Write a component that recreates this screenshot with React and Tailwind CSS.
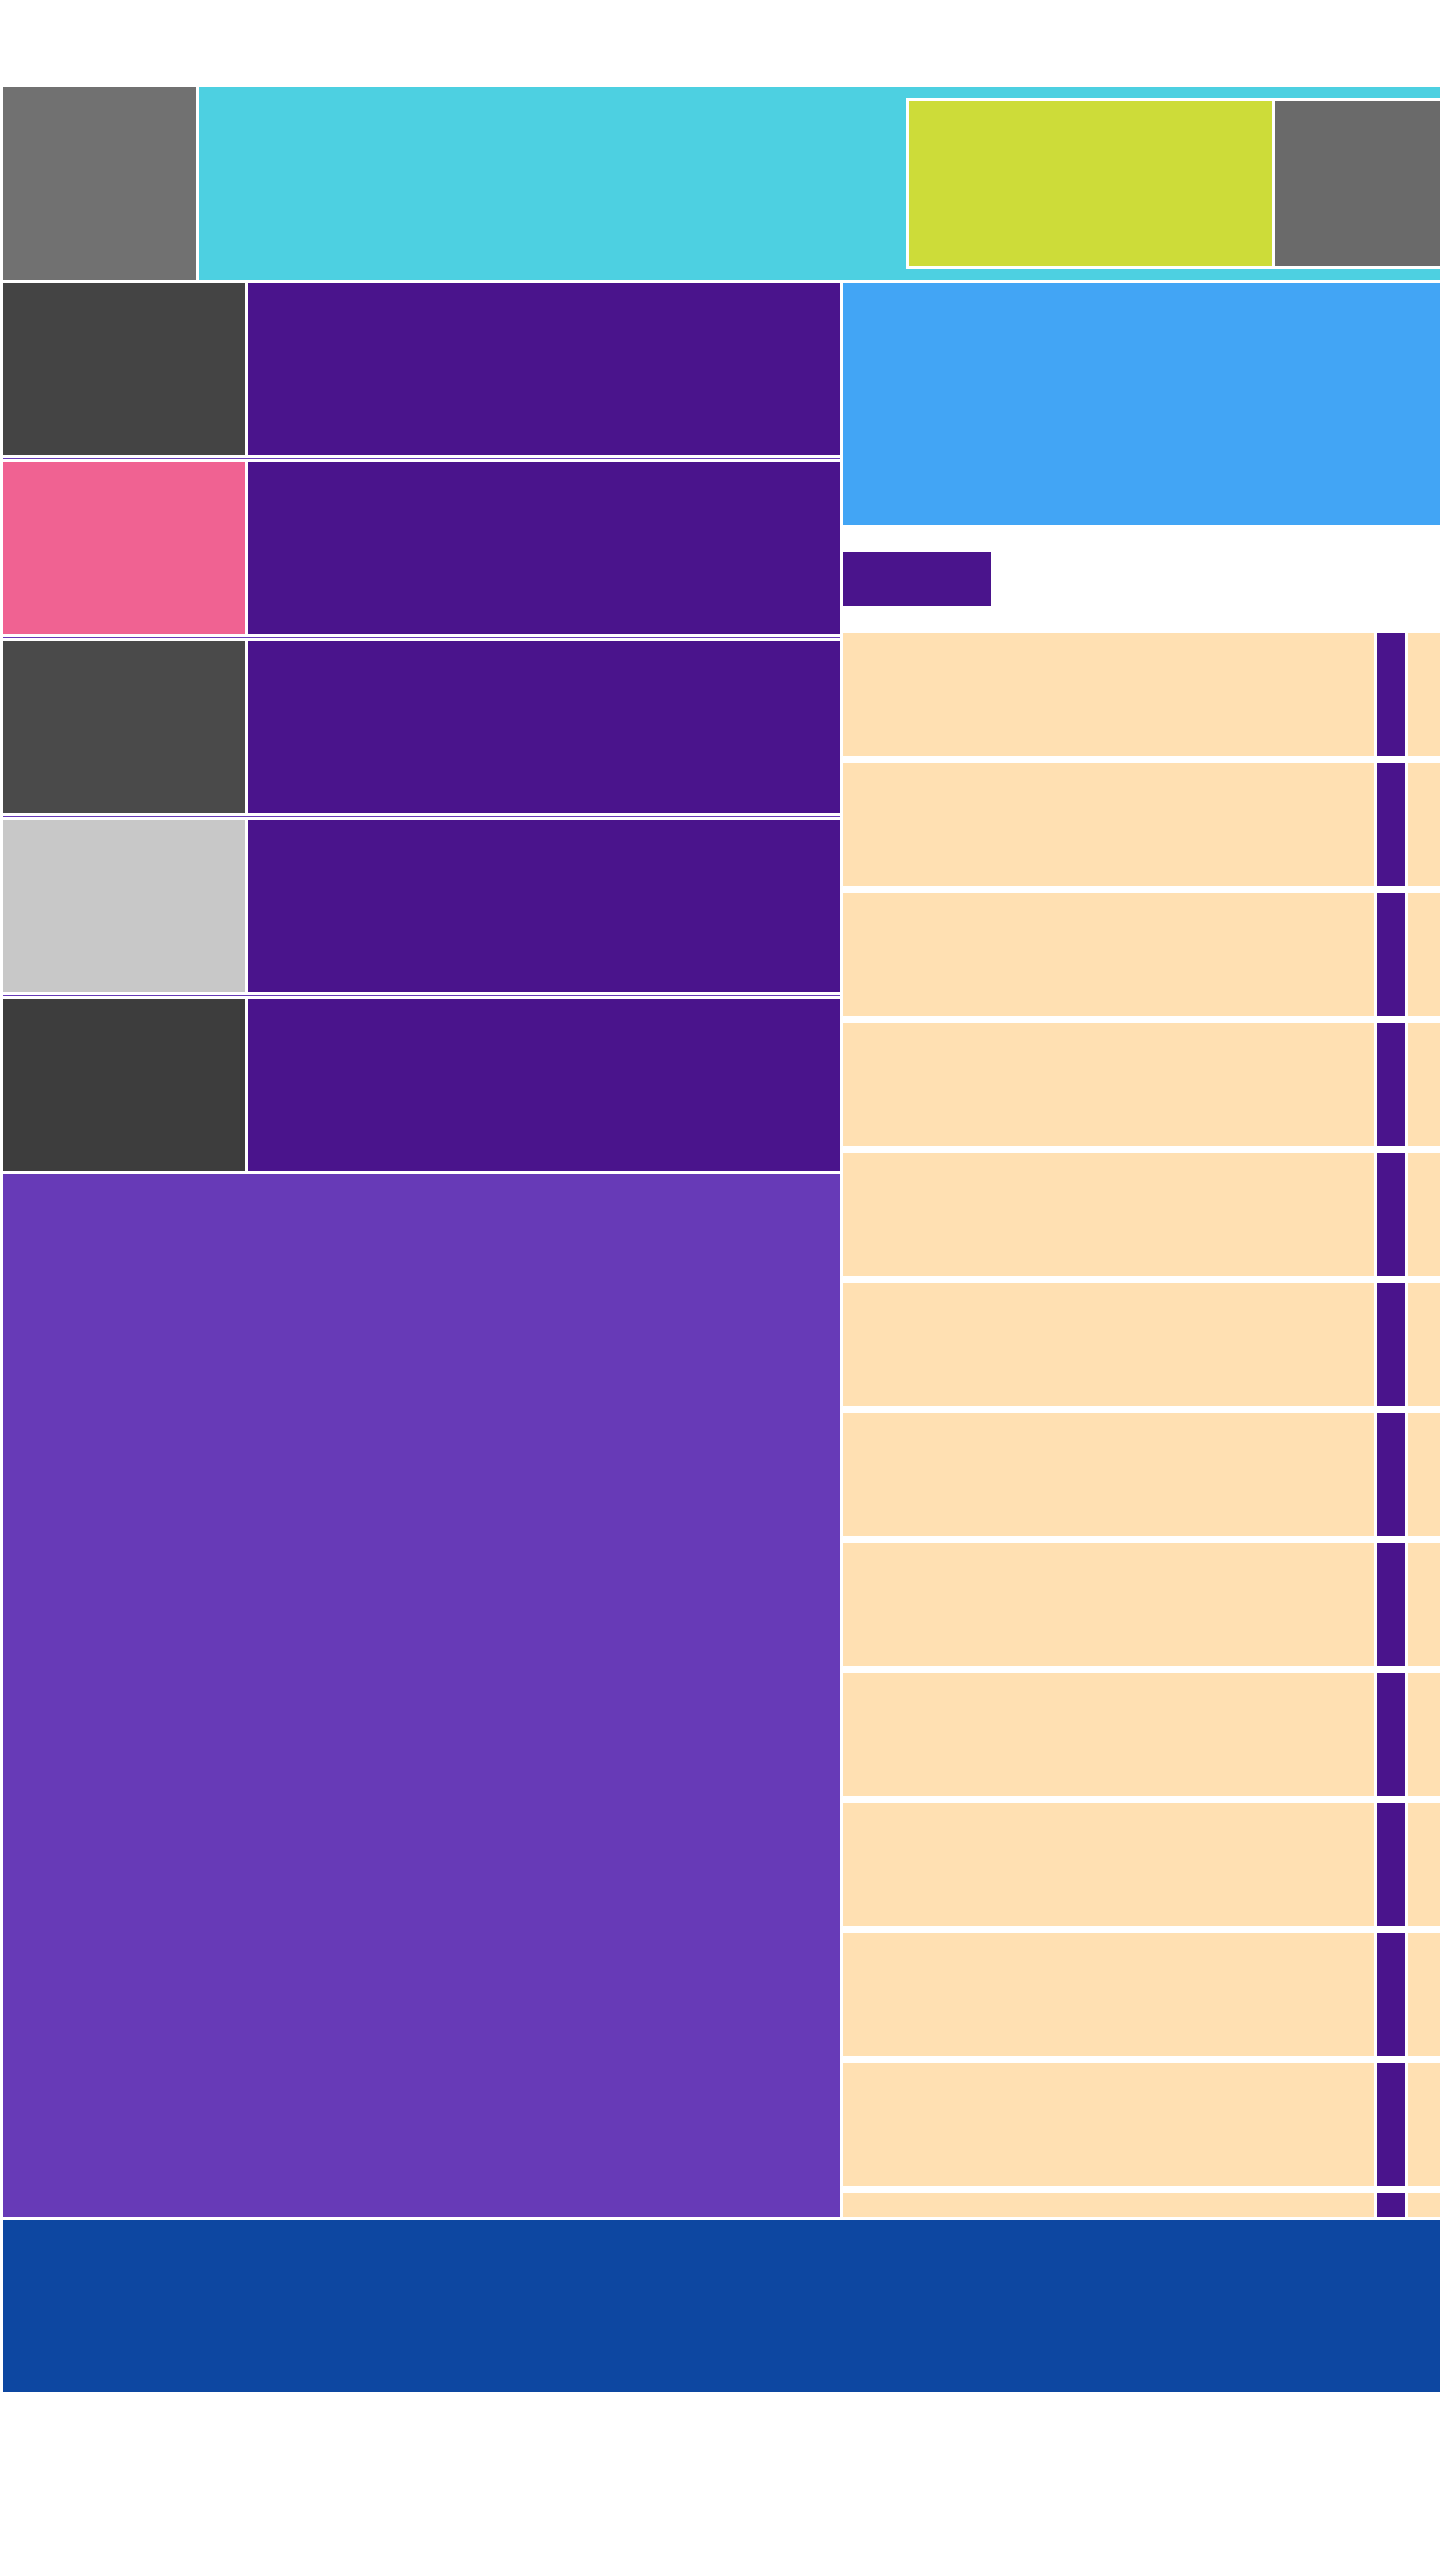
const leftRows = ["bg-[#444444]", "bg-[#f06292]", "bg-[#4a4a4a]", "bg-[#c8c8c8]", "bg-[#3d3d3d]"];

const LeftRow = ({ color }) => (
    <div className="flex gap-[3px] h-[172px]">
        <div className={`w-[242px] shrink-0 ${color}`}></div>
        <div className="flex-1 bg-[#4a148c]"></div>
    </div>
);

const Separator = () => (
    <div className="py-[3px]">
        <div className="h-px bg-[#673ab7]"></div>
    </div>
);

const PeachRow = () => (
    <div className="flex gap-[3px] h-[123px] shrink-0">
        <div className="w-[531px] shrink-0 bg-[#ffe0b2]"></div>
        <div className="w-[28px] shrink-0 bg-[#4a148c]"></div>
        <div className="flex-1 bg-[#ffe0b2]"></div>
    </div>
);

export default function App() {
    return (
        <div className="w-[1440px] h-[2560px] overflow-hidden bg-white pt-[87px]">
            <div className="w-[1600px] ml-[3px] flex flex-col gap-[3px]">

                {/* header */}
                <div className="flex gap-[3px] h-[193px]">
                    <div className="w-[193px] shrink-0 bg-[#717171]"></div>
                    <div className="flex-1 bg-[#4dd0e1] pt-[11px] pl-[707px]">
                        <div className="flex gap-[3px] h-[171px] bg-white p-[3px] w-[600px]">
                            <div className="w-[363px] shrink-0 bg-[#cddc39]"></div>
                            <div className="flex-1 bg-[#6a6a6a]"></div>
                        </div>
                    </div>
                </div>

                {/* main */}
                <div className="flex gap-[3px] h-[1934px]">
                    <div className="w-[837px] shrink-0 flex flex-col">
                        {leftRows.map((c, i) => (
                            <div key={i}>
                                {i > 0 && <Separator />}
                                <LeftRow color={c} />
                            </div>
                        ))}
                        <div className="flex-1 mt-[3px] bg-[#673ab7]"></div>
                    </div>

                    <div className="flex-1 flex flex-col overflow-hidden">
                        <div className="h-[242px] shrink-0 bg-[#42a5f5]"></div>
                        <div className="py-[27px] shrink-0">
                            <div className="w-[148px] h-[54px] bg-[#4a148c]"></div>
                        </div>
                        <div className="flex flex-col gap-[7px]">
                            {Array.from({ length: 13 }).map((_, i) => (
                                <PeachRow key={i} />
                            ))}
                        </div>
                    </div>
                </div>

                {/* footer */}
                <div className="h-[172px] bg-[#0d47a1]"></div>
            </div>
        </div>
    );
}
